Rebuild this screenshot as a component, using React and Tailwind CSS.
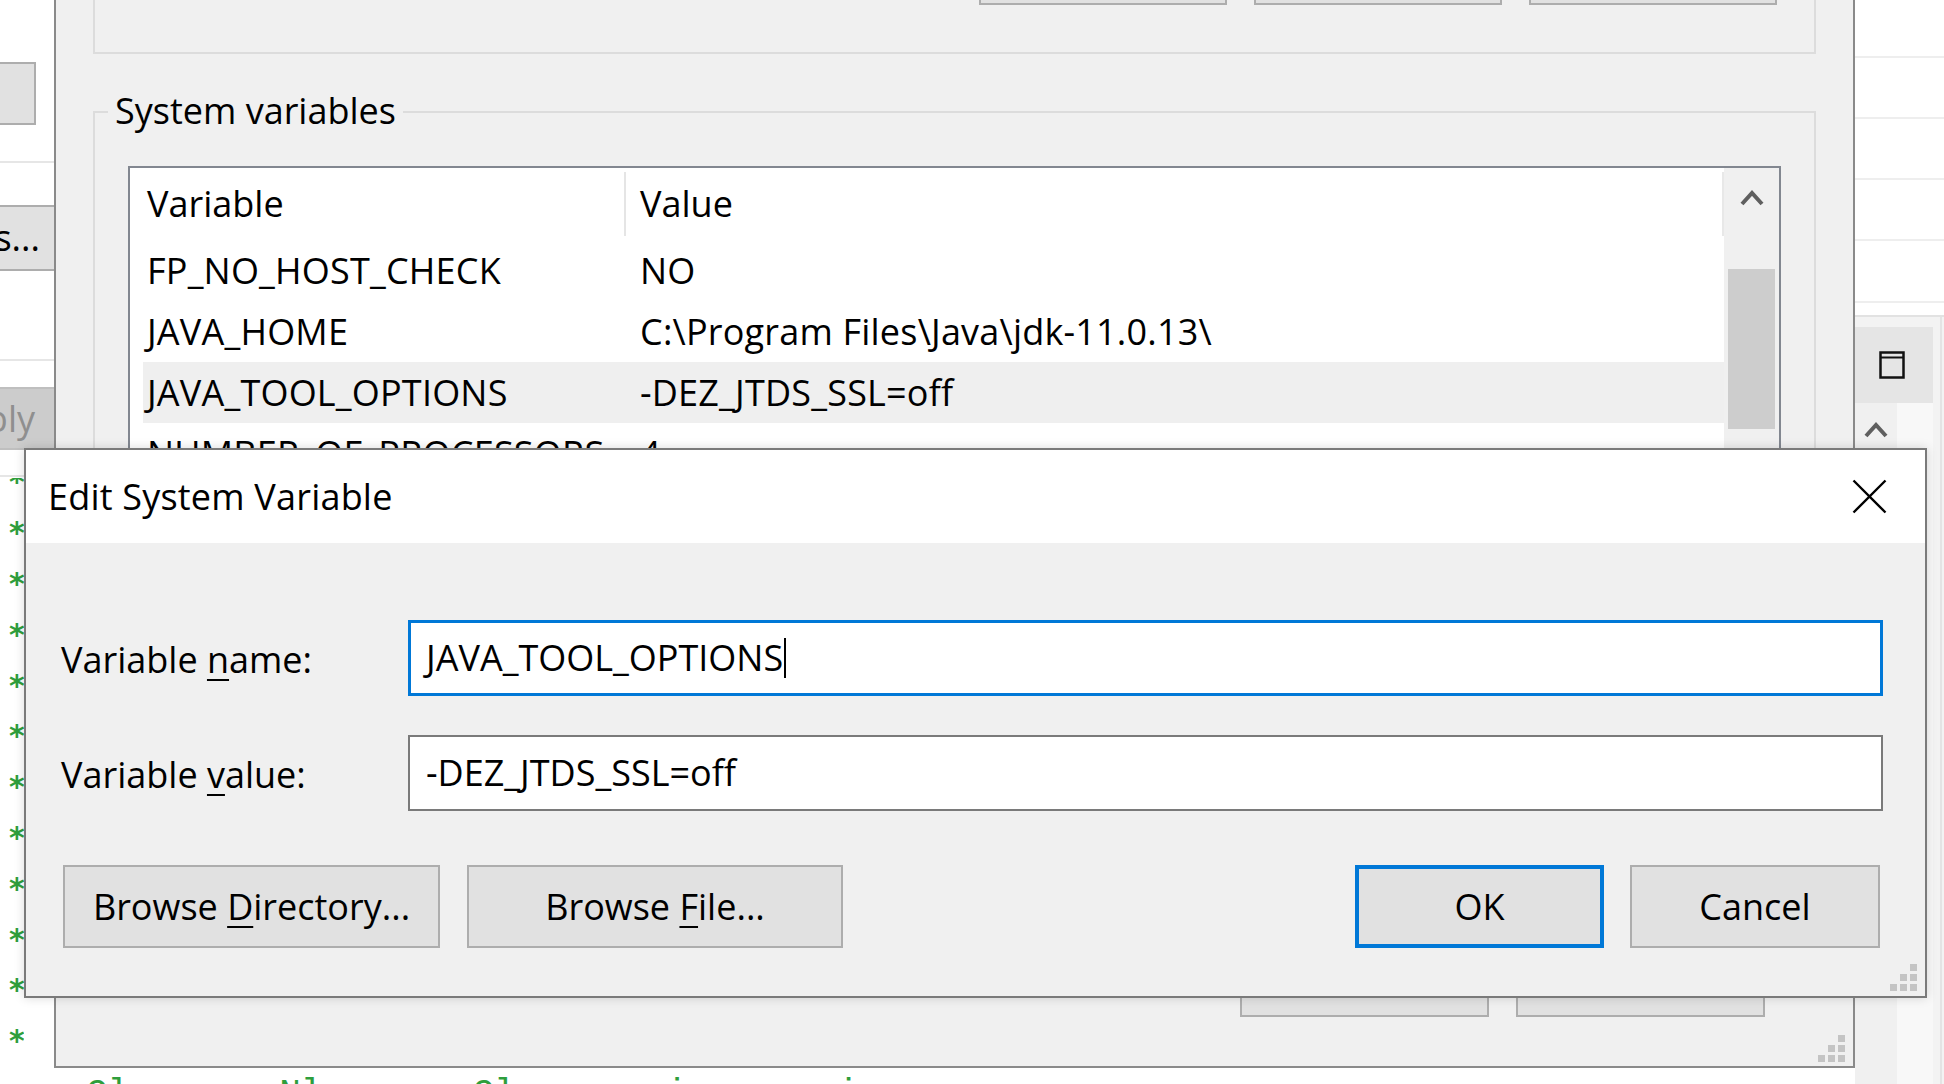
import React from "react";

function Grip({ className }) {
  const sq = "w-[7px] h-[7px] bg-[#c4c4c4]";
  return (
    <div className={"grid grid-cols-3 gap-[3px] " + className}>
      <div />
      <div />
      <div className={sq} />
      <div />
      <div className={sq} />
      <div className={sq} />
      <div className={sq} />
      <div className={sq} />
      <div className={sq} />
    </div>
  );
}

function WinButton({ children, className = "" }) {
  return (
    <div
      className={
        "h-[83px] flex items-center justify-center bg-[#e1e1e1] border-2 border-[#adadad] text-[36px] leading-none " +
        className
      }
    >
      {children}
    </div>
  );
}

const rows = [
  ["FP_NO_HOST_CHECK", "NO", false],
  ["JAVA_HOME", "C:\\Program Files\\Java\\jdk-11.0.13\\", false],
  ["JAVA_TOOL_OPTIONS", "-DEZ_JTDS_SSL=off", true],
  ["NUMBER_OF_PROCESSORS", "4", false],
];

export default function App() {
  return (
    <div className="relative w-[1944px] h-[1084px] overflow-hidden bg-white text-black font-['Open_Sans',sans-serif]">
      {/* IDE editor behind everything */}
      <div className="absolute left-0 top-[450px] w-[24px] flex flex-col overflow-hidden">
        {Array.from({ length: 12 }).map((_, i) => (
          <div
            key={i}
            className="h-[50.8px] flex items-center pl-[9px] pt-[14px] text-[#2e9e3c] text-[30px] font-bold leading-none font-['DejaVu_Sans',sans-serif]"
          >
            *
          </div>
        ))}
      </div>
      <div className="absolute left-[86px] top-[1077px] flex gap-[150px] text-[#2e9e3c] text-[36px] leading-none font-['Liberation_Mono',monospace]">
        <span>Cl</span>
        <span>Nl</span>
        <span>Cl</span>
        <span>i</span>
        <span>i</span>
      </div>

      {/* System Properties window (left strip) */}
      <div className="absolute left-0 top-0 w-[70px] h-[478px] bg-white flex flex-col">
        <div className="mt-[62px] h-[63px] w-[36px] bg-[#e1e1e1] border-2 border-l-0 border-[#adadad]" />
        <div className="mt-[36px] h-[2px] bg-[#e6e6e6]" />
        <div className="mt-[42px] h-[66px] bg-[#e1e1e1] border-y-2 border-[#adadad] flex items-center justify-end pr-[30px] overflow-hidden text-[36px] leading-none whitespace-nowrap">
          Variables...
        </div>
        <div className="mt-[88px] h-[2px] bg-[#e6e6e6]" />
        <div className="mt-[26px] h-[63px] bg-[#cccccc] border-y-2 border-[#bfbfbf] flex items-center justify-end pr-[35px] overflow-hidden text-[36px] leading-none text-[#8f8f8f] whitespace-nowrap">
          Apply
        </div>
        <div className="mt-[25px] h-[2px] bg-[#e6e6e6]" />
      </div>

      {/* Right side window */}
      <div className="absolute left-[1855px] top-0 w-[89px] h-[1084px] bg-white flex flex-col">
        <div className="h-[58px] border-b-2 border-[#eeeeee]" />
        <div className="h-[61px] border-b-2 border-[#eeeeee]" />
        <div className="h-[61px] border-b-2 border-[#eeeeee]" />
        <div className="h-[61px] border-b-2 border-[#eeeeee]" />
        <div className="h-[62px] border-b-2 border-[#eeeeee]" />
        <div className="mt-[12px] flex-1 border-t-2 border-[#e2e2e2] bg-[#f3f3f3] flex">
          <div className="w-[78px] flex flex-col">
            <div className="mt-[10px] h-[76px] bg-[#e5e5e5] flex items-center justify-center pr-[4px]">
              <svg width="26" height="28" viewBox="0 0 26 28">
                <rect x="1.5" y="1.5" width="23" height="25" fill="none" stroke="#111" strokeWidth="2.5" />
                <line x1="1.5" y1="6.5" x2="24.5" y2="6.5" stroke="#111" strokeWidth="2" />
              </svg>
            </div>
            <div className="flex flex-1">
              <div className="w-[42px] bg-[#f0f0f0] flex justify-center pt-[16px]">
                <svg width="26" height="20" viewBox="0 0 26 20">
                  <polyline points="3,17 13,6 23,17" fill="none" stroke="#5f5f5f" strokeWidth="4" />
                </svg>
              </div>
              <div className="flex-1 bg-[#f8f8f8]" />
            </div>
          </div>
          <div className="w-[7px]" />
          <div className="w-[2px] bg-[#e4e4e4]" />
        </div>
      </div>

      {/* Environment Variables dialog */}
      <div className="absolute left-[54px] top-[-30px] w-[1801px] h-[1098px] bg-[#f0f0f0] border-2 border-[#8a8a8a] flex flex-col px-[37px]">
        {/* User variables group (bottom only) */}
        <div className="h-[82px] border-x-2 border-b-2 border-[#dcdcdc] flex justify-end items-end pb-[47px] pr-[37px] gap-[27px]">
          <WinButton className="w-[248px]" />
          <WinButton className="w-[248px]" />
          <WinButton className="w-[248px]" />
        </div>

        {/* System variables group */}
        <div className="relative mt-[57px] h-[779px] border-2 border-[#dcdcdc] pt-[53px] px-[33px]">
          <div className="absolute left-[13px] top-[-26px] px-[7px] bg-[#f0f0f0] h-[48px] flex items-center text-[36px] leading-none">
            System variables
          </div>
          <div className="h-[700px] bg-white border-2 border-[#828790] flex overflow-hidden">
            <div className="flex-1 flex flex-col">
              {/* header */}
              <div className="h-[72px] flex items-stretch text-[36px] leading-none">
                <div className="w-[494px] flex items-center pl-[17px]">Variable</div>
                <div className="my-[4px] w-[2px] bg-[#e5e5e5]" />
                <div className="flex-1 flex items-center pl-[14px]">Value</div>
                <div className="my-[4px] w-[2px] bg-[#e8e8e8]" />
              </div>
              {rows.map(([k, v, sel]) => (
                <div
                  key={k}
                  className={
                    "ml-[13px] h-[61px] flex items-center text-[36px] leading-none whitespace-nowrap tracking-[0.2px] " +
                    (sel ? "bg-[#efefef]" : "")
                  }
                >
                  <div className="w-[497px] pl-[4px]">{k}</div>
                  <div>{v}</div>
                </div>
              ))}
            </div>
            {/* scrollbar */}
            <div className="w-[55px] bg-[#f0f0f0] flex flex-col items-center">
              <div className="h-[101px] w-full flex justify-center pt-[19px]">
                <svg width="26" height="20" viewBox="0 0 26 20">
                  <polyline points="3,17 13,6 23,17" fill="none" stroke="#5f5f5f" strokeWidth="4" />
                </svg>
              </div>
              <div className="w-[47px] h-[160px] bg-[#cdcdcd]" />
            </div>
          </div>
        </div>

        {/* bottom buttons of env dialog */}
        <div className="mt-[44px] flex justify-end gap-[27px] pr-[51px]">
          <WinButton className="w-[249px]">OK</WinButton>
          <WinButton className="w-[249px]">Cancel</WinButton>
        </div>

        <Grip className="absolute right-[8px] bottom-[4px]" />
      </div>

      {/* Edit System Variable dialog */}
      <div className="absolute left-[24px] top-[448px] w-[1903px] h-[550px] bg-[#f0f0f0] border-2 border-[#7a7a7a] flex flex-col shadow-[0_0_10px_rgba(0,0,0,0.15)]">
        <div className="h-[93px] bg-white flex items-center justify-between pl-[22px] pr-[38px]">
          <div className="text-[36px] leading-none tracking-[0.2px]">Edit System Variable</div>
          <svg width="35" height="35" viewBox="0 0 35 35">
            <path d="M1.5 1.5 L33.5 33.5 M33.5 1.5 L1.5 33.5" stroke="#000" strokeWidth="2.4" />
          </svg>
        </div>
        <div className="flex-1 flex flex-col pl-[35px] pr-[42px]">
          <div className="mt-[77px] flex items-center">
            <div className="w-[347px] text-[36px] leading-none pt-[4px]">
              Variable <span className="underline underline-offset-[6px] decoration-2">n</span>ame:
            </div>
            <div className="flex-1 h-[76px] bg-white border-[3px] border-[#0078d7] flex items-center pl-[15px] text-[36px] leading-none">
              <span>JAVA_TOOL_OPTIONS</span>
              <span className="ml-[1px] w-[2px] h-[40px] bg-black" />
            </div>
          </div>
          <div className="mt-[39px] flex items-center">
            <div className="w-[347px] text-[36px] leading-none pt-[4px]">
              Variable <span className="underline underline-offset-[6px] decoration-2">v</span>alue:
            </div>
            <div className="flex-1 h-[76px] bg-white border-2 border-[#7a7a7a] flex items-center pl-[16px] text-[36px] leading-none">
              -DEZ_JTDS_SSL=off
            </div>
          </div>
          <div className="mt-[54px] flex items-center pl-[2px] pr-[3px]">
            <WinButton className="w-[377px]">
              <span>
                Browse <span className="underline underline-offset-[6px] decoration-2">D</span>irectory...
              </span>
            </WinButton>
            <WinButton className="ml-[27px] w-[376px]">
              <span>
                Browse <span className="underline underline-offset-[6px] decoration-2">F</span>ile...
              </span>
            </WinButton>
            <div className="flex-1" />
            <WinButton className="w-[249px] !border-[4px] !border-[#0078d7]">OK</WinButton>
            <WinButton className="ml-[26px] w-[250px]">Cancel</WinButton>
          </div>
        </div>
        <Grip className="absolute right-[8px] bottom-[5px]" />
      </div>
    </div>
  );
}
